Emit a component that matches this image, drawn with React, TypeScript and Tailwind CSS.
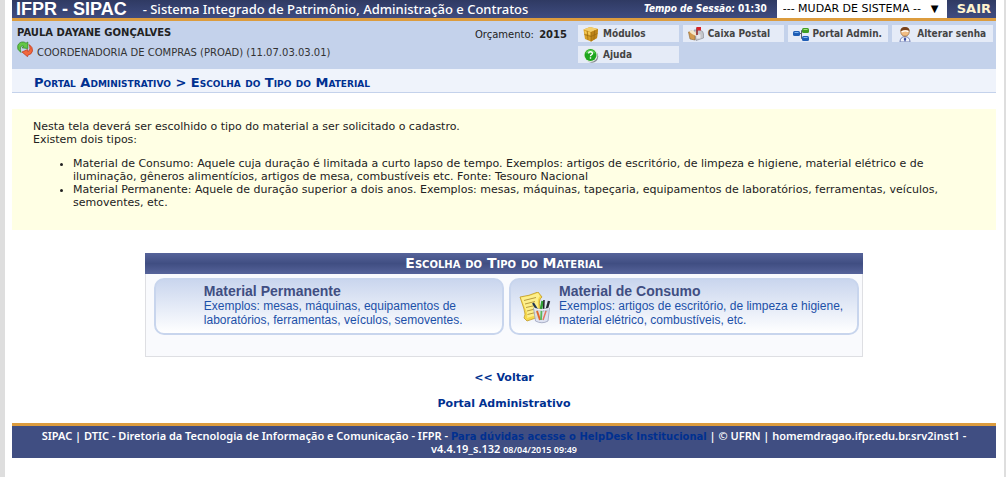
import type { ReactNode } from 'react';

const BoxIcon = () => (
  <svg width="16" height="16" viewBox="0 0 16 16" aria-hidden="true">
    <path d="M.5 3.500L7 1l8 2-1 9-6 3.500L2 13z" fill="#d8a028" />
    <path d="M.5 3.500L7 1l8 2-7 3z" fill="#f3cf6c" />
    <path d="M8 6l7-3-1 9-6 3.500z" fill="#bd8318" />
    <path d="M4 4.800l1 9.200M1.200 8.500L8 10.500l6.500-3M8 6v9.500M11.500 4.500l-.5 9" stroke="#94640d" strokeWidth="0.600" fill="none" />
    <path d="M1.300 4.700l2.300.700.3 2.600-2-.6zM5 5.800l2.300.700v2.600l-2-.6z" fill="#f5cb58" />
  </svg>
);

const MailboxIcon = () => (
  <svg width="16" height="16" viewBox="0 0 16 16" aria-hidden="true">
    <path d="M6 4h6q3.500 1 3.500 4v4L8 14.500z" fill="#c4c6cb" stroke="#85888f" strokeWidth="0.600" />
    <path d="M.5 6l3-1 3.500 3v6l-5-1z" fill="#d39a4d" stroke="#8a6636" strokeWidth="0.600" />
    <path d="M1 5.500L4.500 4 8 7v3L4 8z" fill="#f4e6c8" />
    <path d="M8.500 8.500h4v4h-4z" fill="#e6e7ea" />
    <path d="M9 9V1.500" stroke="#8d1111" strokeWidth="1.400" />
    <path d="M8.500 1H13v3.500H9.500z" fill="#d8232a" />
  </svg>
);

const NodesIcon = () => (
  <svg width="16" height="16" viewBox="0 0 16 16" aria-hidden="true">
    <path d="M6 7.500h2.500M8.500 4.500v8M8.500 4.500h2M8.500 12.500h2" stroke="#555d68" fill="none" />
    <rect x="0" y="5" width="7" height="5" rx="1.500" fill="#1f5db5" />
    <rect x="9" y="2" width="7" height="5" rx="1.500" fill="#3f9d22" />
    <rect x="9" y="10" width="7" height="5" rx="1.500" fill="#1f5db5" />
    <path d="M1.500 6.500h4M10.500 11.500h4" stroke="#7db5f0" />
    <path d="M10.500 3.500h4" stroke="#a2e37d" />
  </svg>
);

const PersonIcon = () => (
  <svg width="16" height="16" viewBox="0 0 16 16" aria-hidden="true">
    <path d="M3 16q0-5 5-5.500 5 .5 5 5.500z" fill="#f2f4fa" stroke="#7382b6" />
    <path d="M8 11l1.300 2L8 16l-1.300-3z" fill="#3548a0" />
    <circle cx="8" cy="6" r="4.200" fill="#f2bd84" stroke="#9a6535" strokeWidth="0.700" />
    <path d="M3.500 5.500Q3 1 8 1t4.500 4.500Q11 3.500 8 4 5 4 3.500 5.500z" fill="#7a431c" />
    <path d="M4.500 6q3.500-2 7-.5" stroke="#fff" strokeWidth="1.400" fill="none" />
  </svg>
);

const HelpIcon = () => (
  <svg width="16" height="16" viewBox="0 0 16 16" aria-hidden="true">
    <circle cx="9" cy="9.500" r="6.200" fill="#858a92" />
    <circle cx="7.500" cy="8" r="7" fill="#e4efe2" />
    <circle cx="7.500" cy="8" r="6" fill="#1ea51e" />
    <path d="M2.500 6.500q1-3.700 5-3.700t5 3.700q-5-1.500-10 0z" fill="#55c84e" />
    <path d="M5.500 6.500q.2-1.700 2-1.700t2 1.500q0 1-1.200 1.500-.8.400-.8 1.400M7.500 10.300v1.400" stroke="#fff" strokeWidth="1.400" fill="none" />
  </svg>
);

const SwapIcon = () => (
  <svg width="16" height="16" viewBox="0 0 16 16" aria-hidden="true">
    <path d="M4 11.500Q-.5 8.500.8 4.500 2.500.5 6.500 1q1.500.2 2.500 1.200L10.800 1v6.500L5 6.800l1.700-1.700Q4.500 4 3.500 6.300 3 8.500 4 11.500z" fill="#63c746" stroke="#2b7f1c" strokeWidth="0.700" />
    <path d="M12 3.500q4 2.500 3.500 6.500-.8 3.500-4.500 4l-.5 1.700L5 11l5.500-2.500.2 2q2-.5 2.200-2.700.1-2-.9-4.300z" fill="#f2683d" stroke="#b93318" strokeWidth="0.700" />
  </svg>
);

const SuppliesIcon = () => (
  <svg width="32" height="32" viewBox="0 0 32 32" aria-hidden="true">
    <path d="M1 5Q10 4 19 0l4 5q-4 3-2 10l2 10q-8 1-15 4l-3-3q2-3 0-9z" fill="#f6d84b" stroke="#bf9a2b" strokeWidth="0.800" />
    <path d="M2 5.500Q11 4.500 19 1l2 3q-3 3-2 9l1 10q-7 1-12 3 1-5-2-10z" fill="#fdef8c" />
    <path d="M5 8.500l12-3M6 12l10-2.500M7 15.500l9-2M8 19l8-2M8.500 22.500l8-2" stroke="#b79a3d" />
    <path d="M19 19l-5-8" stroke="#1f3553" strokeWidth="2.200" />
    <path d="M21.500 20l2-11" stroke="#2f9e35" strokeWidth="2.500" />
    <path d="M24.500 20l.5-12" stroke="#1d1d22" strokeWidth="1.500" />
    <path d="M27 20l3-11" stroke="#252a35" strokeWidth="2.400" />
    <path d="M14.500 16q8 3 16 0L29 29q-6 3.500-12.500 0z" fill="#d9dff0" fillOpacity="0.850" stroke="#9aa1bd" strokeWidth="0.800" />
    <path d="M18 19l3 9" stroke="#e0682f" strokeWidth="2" />
    <path d="M22.500 19l-.5 9" stroke="#57b75a" strokeWidth="1.800" />
    <path d="M27 19l-3 9" stroke="#e2775f" strokeWidth="1.500" />
    <path d="M15 16.500q7.500 2.500 15 0" stroke="#f4f6fc" strokeWidth="1.200" fill="none" />
  </svg>
);

const MENU = [
  { label: 'Módulos', icon: <BoxIcon /> },
  { label: 'Caixa Postal', icon: <MailboxIcon /> },
  { label: 'Portal Admin.', icon: <NodesIcon /> },
  { label: 'Alterar senha', icon: <PersonIcon /> },
  { label: 'Ajuda', icon: <HelpIcon /> },
];

const Header = () => (
  <header className="flex h-[21px] items-center border-b-[3px] border-[#dc9c3e] bg-linear-to-b from-[#2f3a63] to-[#3f4c80] pl-1 text-white">
    <h1 className="font-['Liberation_Sans'] text-[18px] leading-[18px] font-bold">IFPR - SIPAC</h1>
    <span className="ml-4 grow font-['Noto_Sans'] text-[13px] leading-[18px] font-medium whitespace-nowrap">
      - Sistema Integrado de Patrimônio, Administração e Contratos
    </span>
    <span className="mr-2.5 font-['DejaVu_Sans_Condensed'] text-[10px] leading-[18px] font-bold whitespace-nowrap">
      <em>Tempo de Sessão:</em> 01:30
    </span>
    <select
      aria-label="Mudar de sistema"
      className="h-[18px] w-[170px] appearance-none bg-white pl-1.5 text-[11px] leading-[18px] text-black"
    >
      <option>--- MUDAR DE SISTEMA --</option>
    </select>
    <span className="pointer-events-none -ml-4 w-4 text-[10px] leading-[18px] text-black">▼</span>
    <a href="#sair" className="mr-[5px] ml-2.5 text-[13px] leading-[18px] font-bold text-[#fff3cf]">
      SAIR
    </a>
  </header>
);

const UserPanel = () => (
  <section className="flex h-12 bg-[#c4d2eb] pr-[3px] pl-[5px] text-[#222]">
    <div className="grow">
      <p className="mt-1 text-[10px] leading-4 font-bold">PAULA DAYANE GONÇALVES</p>
      <p className="flex gap-1 text-[10px]">
        <SwapIcon />
        <span className="pt-1 leading-4 text-[#333]">COORDENADORIA DE COMPRAS (PROAD) (11.07.03.03.01)</span>
      </p>
    </div>
    <p className="mt-1.5 mr-[11px] text-[10px] leading-4 whitespace-nowrap">
      Orçamento: <strong className="ml-0.5">2015</strong>
    </p>
    <nav className="mt-1 grid w-[415px] shrink-0 grid-cols-4 content-start gap-1">
      {MENU.map(item => (
        <a
          key={item.label}
          href="#menu"
          className="flex h-[17px] items-center gap-1 overflow-hidden bg-[#e5ebf7] pl-[5px] font-['DejaVu_Sans_Condensed'] text-[10px] font-bold whitespace-nowrap text-[#444]"
        >
          {item.icon}
          {item.label}
        </a>
      ))}
    </nav>
  </section>
);

const OptionCard = ({ title, text, icon }: { title: string; text: string; icon?: ReactNode }) => (
  <a
    href="#material"
    className="flex h-[57px] rounded-[10px] border-2 border-[#c8d5ed] bg-linear-to-b from-[#cad6ee] to-white font-['Liberation_Sans'] text-[12px] leading-[14px] text-[#1c50a8]"
  >
    <span className="w-12 shrink-0 pt-3 pl-2">{icon}</span>
    <span className="pt-[3px]">
      <strong className="block text-[14px] leading-4 text-[#404e82]">{title}</strong>
      {text}
    </span>
  </a>
);

const App = () => (
  <div className="min-h-screen bg-[#dedede] pr-0.5 pl-[5px] font-['DejaVu_Sans',sans-serif] text-[11px] leading-[13px]">
    <div className="min-h-screen bg-white pr-2 pl-[7px]">
      <Header />
      <UserPanel />
      <h2 className="h-6 border-b border-[#c4d2eb] bg-[#eff3fb] pl-[22px] text-[13px] leading-[28px] font-bold text-[#003090] [font-variant:small-caps]">
        Portal Administrativo &gt; Escolha do Tipo do Material
      </h2>

      <section className="mt-4 bg-[#ffffe4] pt-[11px] pr-5 pb-[21px] pl-[21px] text-[#222]">
        <p>Nesta tela deverá ser escolhido o tipo do material a ser solicitado o cadastro.</p>
        <p>Existem dois tipos:</p>
        <ul className="mt-[11px] list-disc pl-10">
          <li>
            Material de Consumo: Aquele cuja duração é limitada a curto lapso de tempo. Exemplos: artigos de
            escritório, de limpeza e higiene, material elétrico e de iluminação, gêneros alimentícios, artigos de
            mesa, combustíveis etc. Fonte: Tesouro Nacional
          </li>
          <li>
            Material Permanente: Aquele de duração superior a dois anos. Exemplos: mesas, máquinas, tapeçaria,
            equipamentos de laboratórios, ferramentas, veículos, semoventes, etc.
          </li>
        </ul>
      </section>

      <section className="mx-auto mt-[23px] w-[73%] border border-t-0 border-[#dedfe3] bg-[#f9fafd]">
        <h3 className="-mx-px h-[21px] bg-linear-to-b from-[#56639a] via-[#404e82] to-[#56639a] text-center text-[14px] leading-[21px] font-bold text-white [font-variant:small-caps]">
          Escolha do Tipo do Material
        </h3>
        <div className="grid grid-cols-2 gap-[5px] pt-1 pr-[3px] pb-[21px] pl-2">
          <OptionCard
            title="Material Permanente"
            text="Exemplos: mesas, máquinas, equipamentos de laboratórios, ferramentas, veículos, semoventes."
          />
          <OptionCard
            title="Material de Consumo"
            text="Exemplos: artigos de escritório, de limpeza e higiene, material elétrico, combustíveis, etc."
            icon={<SuppliesIcon />}
          />
        </div>
      </section>

      <nav className="mt-[14px] flex flex-col items-center gap-[13px] font-bold text-[#003090]">
        <a href="#voltar">&lt;&lt; Voltar</a>
        <a href="#portal">Portal Administrativo</a>
      </nav>

      <footer className="mt-[13px] border-t-[3px] border-[#dc9c3e] bg-[#404e82] px-6 pt-1 pb-0.5 text-center font-['Noto_Sans'] text-[11px] leading-3 font-semibold text-white">
        SIPAC | DTIC - Diretoria da Tecnologia de Informação e Comunicação - IFPR -{' '}
        <a href="#helpdesk" className="font-['DejaVu_Sans'] text-[10px] font-bold text-[#003090]">
          Para dúvidas acesse o HelpDesk Institucional
        </a>{' '}
        | © UFRN | homemdragao.ifpr.edu.br.srv2inst1 - v4.4.19_s.132 <small className="text-[9px]">08/04/2015 09:49</small>
      </footer>
    </div>
  </div>
);

export default App;
